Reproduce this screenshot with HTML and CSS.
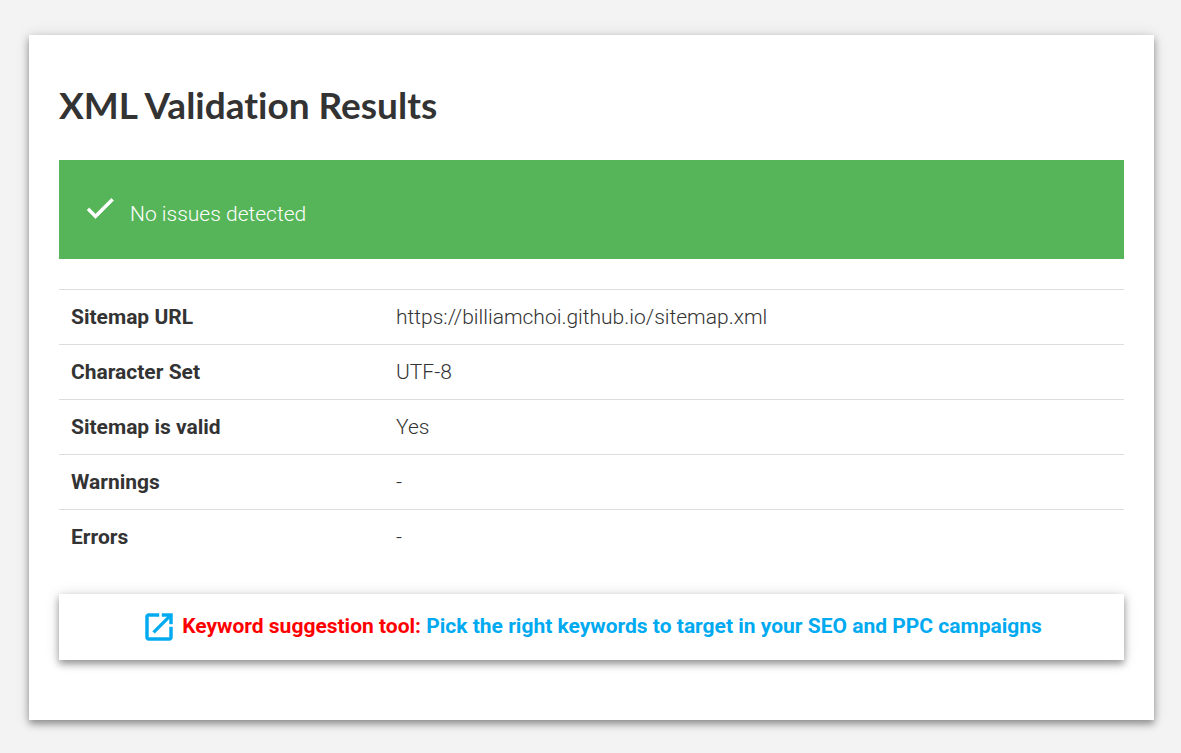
FILE: index.html
```html
<!DOCTYPE html>
<html lang="en">
<head>
<meta charset="utf-8">
<title>XML Validation Results</title>
<link rel="stylesheet" href="styles.css">
</head>
<body>
<main class="card">
  <h1 class="title">XML Validation Results</h1>
  <div class="alert" role="status">
    <svg class="alert-icon" viewBox="0 0 24 24" aria-hidden="true"><path d="M9 16.17L4.83 12l-1.42 1.41L9 19 21 7l-1.41-1.41z"/></svg>
    <span class="alert-text">No issues detected</span>
  </div>
  <table class="results">
    <tbody>
      <tr><th scope="row">Sitemap URL</th><td>https://billiamchoi.github.io/sitemap.xml</td></tr>
      <tr><th scope="row">Character Set</th><td>UTF-8</td></tr>
      <tr><th scope="row">Sitemap is valid</th><td>Yes</td></tr>
      <tr><th scope="row">Warnings</th><td>-</td></tr>
      <tr><th scope="row">Errors</th><td>-</td></tr>
    </tbody>
  </table>
  <a class="promo" href="#">
    <svg class="promo-icon" viewBox="0 0 24 24" aria-hidden="true"><path d="M19 19H5V5h7V3H5c-1.11 0-2 .9-2 2v14c0 1.1.89 2 2 2h14c1.1 0 2-.9 2-2v-7h-2v7zM14 3v2h3.59l-9.83 9.83 1.41 1.41L19 6.41V10h2V3h-7z"/></svg>
    <span><span class="promo-label">Keyword suggestion tool:</span> Pick the right keywords to target in your SEO and PPC campaigns</span>
  </a>
</main>
</body>
</html>
```
FILE: styles.css
```css
* { box-sizing: border-box; }
body {
  margin: 0;
  padding: 35px 27px 33px 29px;
  background: #f3f3f3;
  color: #333;
  font: 300 21px/30px Roboto, sans-serif;
}
.card {
  padding: 45px 30px 60px;
  background: #fff;
  box-shadow: 0 4px 7px rgba(0, 0, 0, .36), 0 1px 14px rgba(0, 0, 0, .14);
}
.title {
  margin: 0 0 30px;
  font: 700 37px/50px Lato, sans-serif;
  font-variant-ligatures: none;
}
.alert {
  display: flex;
  align-items: flex-start;
  gap: 12px;
  margin-bottom: 30px;
  padding: 30px 23px 29px;
  background: #56b559;
  color: #fff;
}
.alert-icon {
  width: 36px;
  height: 36px;
  fill: currentColor;
  stroke: currentColor;
  stroke-width: .5;
}
.alert-text { padding-top: 8px; line-height: 32px; }
.results {
  width: 100%;
  border-collapse: collapse;
}
.results th, .results td {
  height: 55px;
  padding: 12px;
  border-top: 1px solid #ddd;
  text-align: left;
}
.results th { width: 325px; font-weight: 700; }
.promo {
  display: flex;
  justify-content: center;
  align-items: flex-start;
  gap: 5px;
  margin-top: 29px;
  padding: 15px;
  box-shadow: 0 4px 7px rgba(0, 0, 0, .36), 0 1px 14px rgba(0, 0, 0, .14);
  color: #00aaf0;
  font-weight: 700;
  line-height: 34px;
  text-decoration: none;
}
.promo-icon {
  width: 36px;
  height: 36px;
  fill: currentColor;
  stroke: currentColor;
  stroke-width: .3;
}
.promo-label { color: #f00; }
```
